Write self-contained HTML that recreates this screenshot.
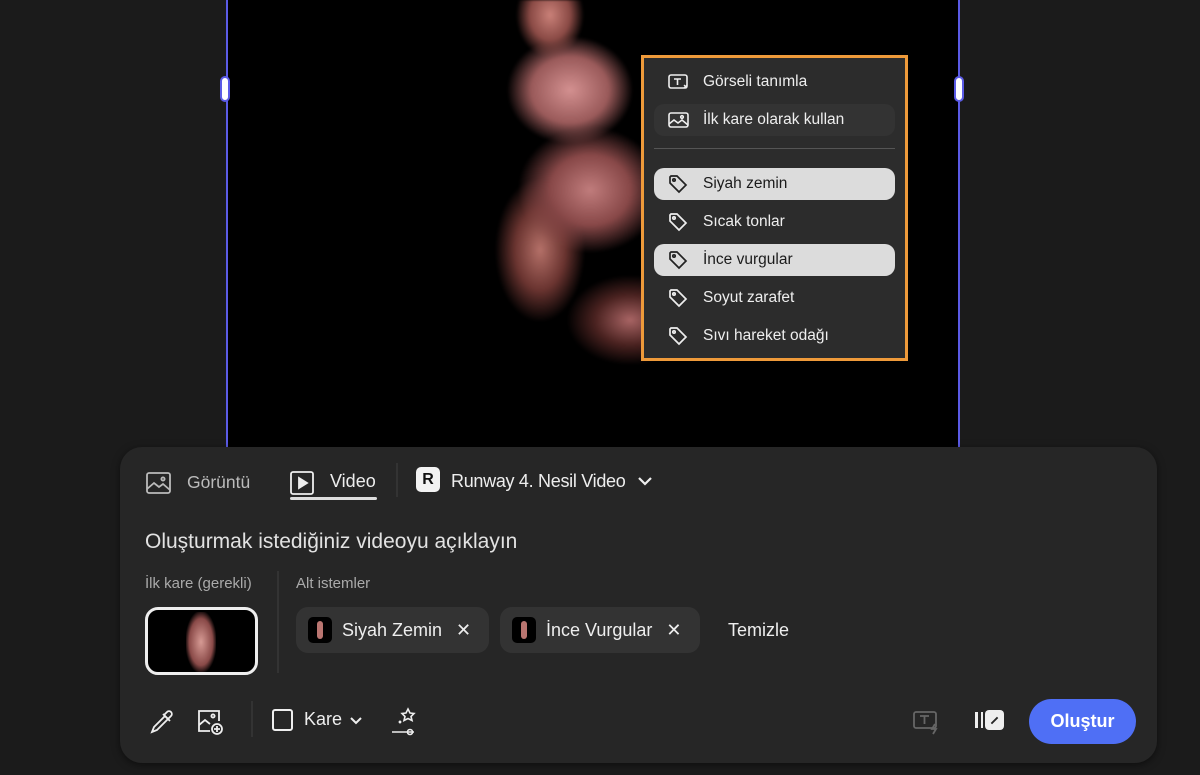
<!DOCTYPE html>
<html><head><meta charset="utf-8"><style>
*{box-sizing:border-box;margin:0;padding:0}
body{width:1200px;height:775px;background:#1b1b1b;font-family:"Liberation Sans","DejaVu Sans",sans-serif;color:#e8e8e8;position:relative;overflow:hidden}
.canvas{position:absolute;left:226px;top:0;width:734px;height:450px;background:#000;border-left:2px solid #5b5be6;border-right:2px solid #5b5be6}
.handle{position:absolute;width:10px;height:26px;border:2px solid #5b5be6;background:#fff;border-radius:5px;top:76px}
.splash{position:absolute;left:470px;top:0;width:240px;height:390px;
background:radial-gradient(ellipse 40px 50px at 80px 15px,#c98078 0%,#8a4a45 50%,transparent 85%),
radial-gradient(ellipse 70px 60px at 100px 90px,#d39090 0%,#9a5a5a 55%,transparent 90%),
radial-gradient(ellipse 80px 70px at 120px 190px,#c07c7c 0%,#884848 50%,transparent 90%),
radial-gradient(ellipse 50px 80px at 70px 250px,#b47068 0%,#6a3430 50%,transparent 90%),
radial-gradient(ellipse 70px 50px at 160px 320px,#a86464 0%,#4a2220 50%,transparent 90%);filter:blur(1px)}
.menu{position:absolute;left:641px;top:55px;width:267px;height:306px;border:3px solid #ee9a3a;background:#2c2c2c;padding:8px 10px}
.mi{height:32px;border-radius:10px;display:flex;align-items:center;padding-left:14px;font-size:15.5px;color:#eee;margin-bottom:6px}
.mi svg{margin-right:13px}
.mi.sel{background:#dcdcdc;color:#1b1b1b}
.mi.hov{background:#333}
.sep{height:1px;background:#555;margin:12px 0 19px}
.panel{position:absolute;left:120px;top:447px;width:1037px;height:316px;background:#262626;border-radius:22px;box-shadow:0 2px 8px rgba(0,0,0,.5)}
.abs{position:absolute}
.chip{position:absolute;top:160px;height:46px;border-radius:12px;background:#333;display:flex;align-items:center;padding:0 12px;font-size:18px;color:#eee}
.thumbmini{width:24px;height:26px;border-radius:5px;background:#000;margin-right:10px;position:relative}
.thumbmini::after{content:"";position:absolute;left:9px;top:4px;width:6px;height:18px;background:#b97570;border-radius:3px}
</style></head><body>
<div class="canvas"></div>
<div class="splash"></div>
<div class="handle" style="left:220px"></div>
<div class="handle" style="left:954px"></div>

<div class="menu">
 <div class="mi"><svg width="22" height="18" viewBox="0 0 22 18" fill="none" stroke="#eee" stroke-width="1.6"><rect x="1" y="2" width="18" height="13" rx="2"/><path d="M6 6h7M9.5 6v6"/><path d="M16 12l3 3M19 12l-3 3" stroke-width="1.3"/></svg>Görseli tanımla</div>
 <div class="mi hov"><svg width="22" height="18" viewBox="0 0 22 18" fill="none" stroke="#eee" stroke-width="1.6"><rect x="1" y="2" width="19" height="14" rx="2"/><path d="M1 13l5-4 4 3 4-3 6 5"/><circle cx="14" cy="6" r="1.3"/></svg>İlk kare olarak kullan</div>
 <div class="sep"></div>
 <div class="mi sel"><svg width="22" height="20" viewBox="0 0 22 20" fill="none" stroke="#222" stroke-width="1.7"><path d="M2 3v6l9 9 7-7-9-9H3z"/><circle cx="6" cy="6" r="1.2"/></svg>Siyah zemin</div>
 <div class="mi"><svg width="22" height="20" viewBox="0 0 22 20" fill="none" stroke="#eee" stroke-width="1.7"><path d="M2 3v6l9 9 7-7-9-9H3z"/><circle cx="6" cy="6" r="1.2"/></svg>Sıcak tonlar</div>
 <div class="mi sel"><svg width="22" height="20" viewBox="0 0 22 20" fill="none" stroke="#222" stroke-width="1.7"><path d="M2 3v6l9 9 7-7-9-9H3z"/><circle cx="6" cy="6" r="1.2"/></svg>İnce vurgular</div>
 <div class="mi"><svg width="22" height="20" viewBox="0 0 22 20" fill="none" stroke="#eee" stroke-width="1.7"><path d="M2 3v6l9 9 7-7-9-9H3z"/><circle cx="6" cy="6" r="1.2"/></svg>Soyut zarafet</div>
 <div class="mi"><svg width="22" height="20" viewBox="0 0 22 20" fill="none" stroke="#eee" stroke-width="1.7"><path d="M2 3v6l9 9 7-7-9-9H3z"/><circle cx="6" cy="6" r="1.2"/></svg>Sıvı hareket odağı</div>
</div>

<div class="panel">
 <svg class="abs" style="left:26px;top:24px" width="26" height="24" viewBox="0 0 26 24" fill="none" stroke="#bbb" stroke-width="1.8"><rect x="1" y="2" width="23" height="20" rx="2"/><path d="M1 18l7-6 5 4 4-3 7 6"/><circle cx="17" cy="8" r="1.6"/></svg>
 <div class="abs" style="left:67px;top:25px;font-size:17.5px;color:#bbb">Görüntü</div>
 <svg class="abs" style="left:170px;top:24px" width="26" height="26" viewBox="0 0 26 26" fill="none" stroke="#eee" stroke-width="1.8"><rect x="1" y="1" width="22" height="22" rx="2"/><path d="M9 7v10l8-5z" fill="#eee"/></svg>
 <div class="abs" style="left:210px;top:24px;font-size:18px;color:#eee">Video</div>
 <div class="abs" style="left:170px;top:50px;width:87px;height:3px;background:#ddd;border-radius:2px"></div>
 <div class="abs" style="left:276px;top:16px;width:2px;height:34px;background:#333"></div>
 <div class="abs" style="left:296px;top:20px;width:24px;height:25px;background:#f2f2f2;border-radius:5px;color:#111;font-weight:bold;font-size:16px;text-align:center;line-height:25px">R</div>
 <div class="abs" style="left:331px;top:24px;font-size:18px;color:#eee;letter-spacing:-0.3px">Runway 4. Nesil Video</div>
 <svg class="abs" style="left:517px;top:28px" width="16" height="12" viewBox="0 0 16 12" fill="none" stroke="#eee" stroke-width="2.2"><path d="M2 3l6 6 6-6"/></svg>
 <div class="abs" style="left:25px;top:83px;font-size:21px;color:#e2e2e2">Oluşturmak istediğiniz videoyu açıklayın</div>
 <div class="abs" style="left:25px;top:128px;font-size:15px;color:#aaa">İlk kare (gerekli)</div>
 <div class="abs" style="left:157px;top:124px;width:2px;height:102px;background:#333"></div>
 <div class="abs" style="left:176px;top:128px;font-size:15px;color:#aaa">Alt istemler</div>
 <div class="abs" style="left:25px;top:160px;width:113px;height:68px;border:3px solid #eee;border-radius:13px;background:#000;overflow:hidden"><div style="position:absolute;left:38px;top:2px;width:30px;height:60px;background:radial-gradient(ellipse at 50% 50%,#d69a94,#8a4a48 55%,transparent 75%)"></div></div>
 <div class="chip" style="left:176px;width:193px"><div class="thumbmini"></div>Siyah Zemin<span style="margin-left:14px;font-size:18px">✕</span></div>
 <div class="chip" style="left:380px;width:200px"><div class="thumbmini"></div>İnce Vurgular<span style="margin-left:14px;font-size:18px">✕</span></div>
 <div class="abs" style="left:608px;top:173px;font-size:18px;color:#eee">Temizle</div>
 <svg class="abs" style="left:28px;top:261px" width="28" height="28" viewBox="0 0 28 28" fill="none" stroke="#eee" stroke-width="1.8"><path d="M4 24l2-5 11-11 3 3-11 11z"/><path d="M16 7l3-3a2.5 2.5 0 014 4l-3 3M15 6l7 7"/></svg>
 <svg class="abs" style="left:76px;top:260px" width="30" height="30" viewBox="0 0 30 30" fill="none" stroke="#eee" stroke-width="1.8"><path d="M14 24H3V4h20v10"/><path d="M3 18l6-5 5 4"/><circle cx="17" cy="9" r="1.6"/><circle cx="21" cy="22" r="5"/><path d="M21 19v6M18 22h6"/></svg>
 <div class="abs" style="left:131px;top:254px;width:2px;height:36px;background:#333"></div>
 <div class="abs" style="left:152px;top:262px;width:21px;height:22px;border:2px solid #eee;border-radius:3px"></div>
 <div class="abs" style="left:184px;top:262px;font-size:18px;color:#eee">Kare</div>
 <svg class="abs" style="left:229px;top:269px" width="14" height="10" viewBox="0 0 14 10" fill="none" stroke="#eee" stroke-width="2"><path d="M2 2l5 5 5-5"/></svg>
 <svg class="abs" style="left:270px;top:259px" width="30" height="32" viewBox="0 0 30 32" fill="none" stroke="#eee" stroke-width="1.6"><path d="M18 3l2 4 4 .5-3 3 1 4-4-2-4 2 1-4-3-3 4-.5z"/><path d="M9 15l2 2M11 15l-2 2"/><path d="M2 26h22"/><circle cx="20" cy="26" r="2.5"/></svg>
 <svg class="abs" style="left:793px;top:263px" width="28" height="26" viewBox="0 0 28 26" fill="none" stroke="#666" stroke-width="1.8"><rect x="1" y="2" width="22" height="16" rx="2"/><path d="M7 6h9M11.5 6v8"/><path d="M22 14l-3 5h4l-3 5"/></svg>
 <div class="abs" style="left:855px;top:265px;width:3px;height:16px;background:#eee"></div>
 <div class="abs" style="left:861px;top:265px;width:2px;height:16px;background:#eee"></div>
 <div class="abs" style="left:865px;top:263px;width:19px;height:20px;background:#eee;border-radius:4px"><div style="position:absolute;left:5px;top:6px;width:9px;height:9px;background:#262626;transform:rotate(45deg);clip-path:polygon(40% 0,60% 0,60% 100%,40% 100%)"></div></div>
 <div class="abs" style="left:909px;top:252px;width:107px;height:45px;border-radius:23px;background:#4f6ff5;color:#fff;font-weight:bold;font-size:18px;text-align:center;line-height:45px">Oluştur</div>
</div>
</body></html>
